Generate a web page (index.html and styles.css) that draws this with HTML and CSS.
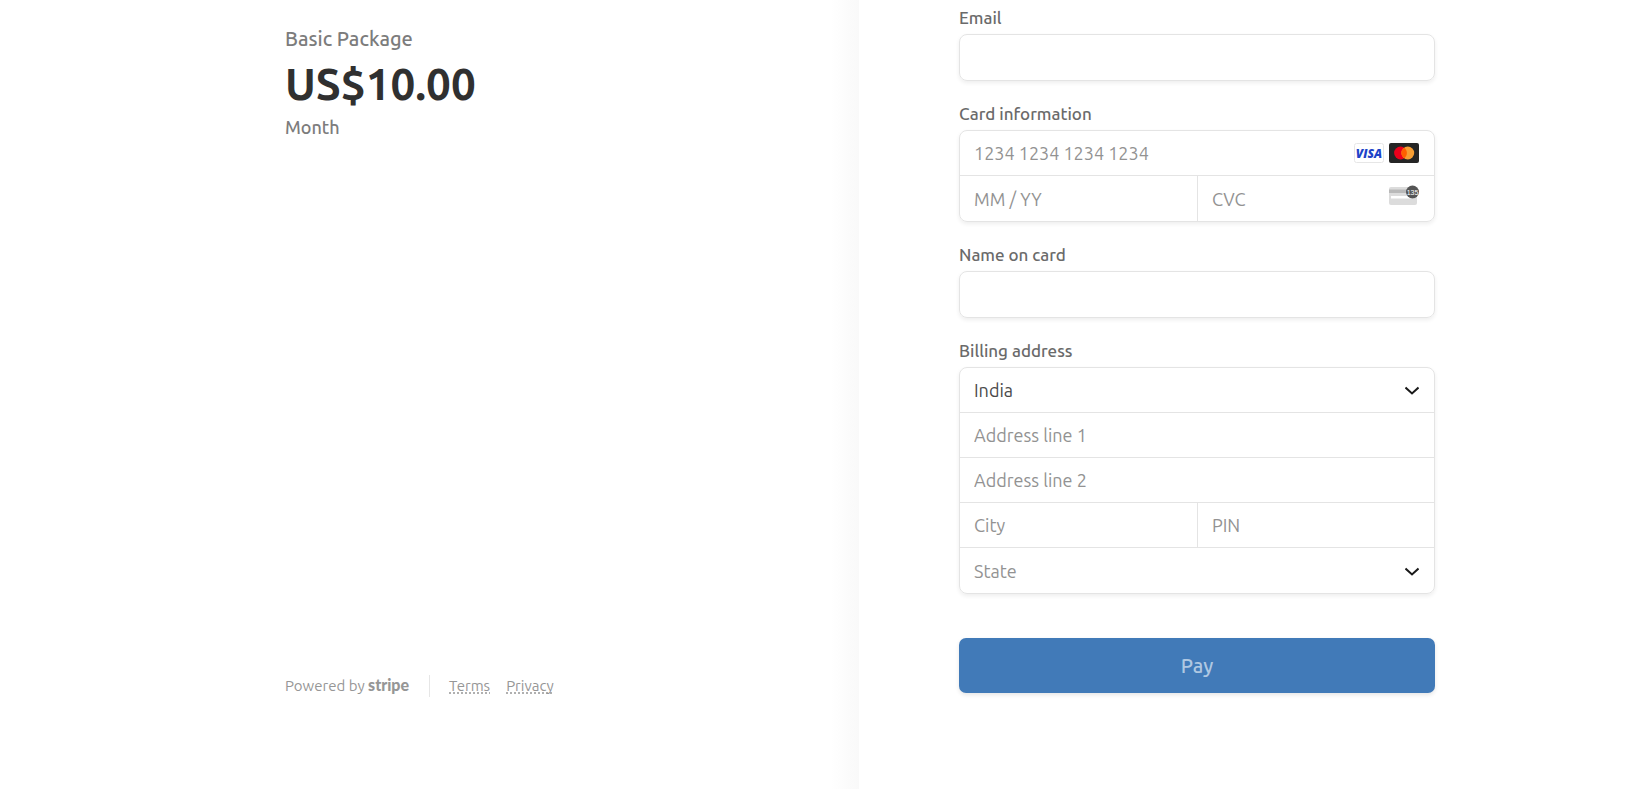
FILE: index.html
```
<!DOCTYPE html>
<html lang="en">
    <head>
        <meta charset="UTF-8">
        <meta name="viewport" content="width=device-width, initial-scale=1.0">
        <title>Checkout</title>
        <link rel="stylesheet" href="styles.css">
    </head>
    <body>
        <div class="checkout">
            <div class="overview">
                <div class="overview-inner">
                    <div class="product">
                        <h1 class="product-name">Basic Package</h1>
                        <p class="product-price">US$10.00</p>
                        <p class="product-period">Month</p>
                    </div>
                    <footer class="footer">
                        <span class="powered">Powered by <strong class="stripe">stripe</strong></span>
                        <nav class="footer-links">
                            <a href="#">Terms</a>
                            <a href="#">Privacy</a>
                        </nav>
                    </footer>
                </div>
            </div>

            <main class="payment">
                <form class="payment-form">
                    <div class="field">
                        <label for="email">Email</label>
                        <div class="box">
                            <div class="cell"><input type="email" id="email"></div>
                        </div>
                    </div>

                    <div class="field">
                        <label for="cardNumber">Card information</label>
                        <div class="box">
                            <div class="cell">
                                <input type="text" id="cardNumber" placeholder="1234 1234 1234 1234">
                                <div class="icons">
                                    <svg width="30" height="20" viewBox="0 0 30 20" role="img" aria-label="Visa">
                                        <rect x="0.5" y="0.5" width="29" height="19" rx="2" fill="#fff" stroke="#e6e6e6"/>
                                        <text class="visa-text" x="15" y="14.5" text-anchor="middle">VISA</text>
                                    </svg>
                                    <svg width="30" height="20" viewBox="0 0 30 20" role="img" aria-label="Mastercard">
                                        <rect width="30" height="20" rx="2" fill="#252525"/>
                                        <circle cx="11.5" cy="10" r="6.4" fill="#eb001b"/>
                                        <circle cx="18.8" cy="10" r="6.4" fill="#f79e33"/>
                                        <path d="M15.15 4.75a6.4 6.4 0 0 1 0 10.5a6.4 6.4 0 0 1 0-10.5z" fill="#ff5f00"/>
                                    </svg>
                                </div>
                            </div>
                            <div class="row">
                                <div class="cell"><input type="text" placeholder="MM / YY" aria-label="Expiration"></div>
                                <div class="cell">
                                    <input type="text" placeholder="CVC" aria-label="CVC">
                                    <div class="icons">
                                        <svg width="30" height="28" viewBox="0 0 30 28" aria-hidden="true">
                                            <rect y="2" width="28" height="18" rx="2" fill="#dcdcdc"/>
                                            <path d="M0 4.5h28V8H0z" fill="#b9b9b9"/>
                                            <rect x="2" y="11" width="23" height="2.5" fill="#fff"/>
                                            <circle cx="23.5" cy="7" r="6.5" fill="#555"/>
                                            <text class="cvc-text" x="23.5" y="9.5" text-anchor="middle">135</text>
                                        </svg>
                                    </div>
                                </div>
                            </div>
                        </div>
                    </div>

                    <div class="field">
                        <label for="cardName">Name on card</label>
                        <div class="box">
                            <div class="cell"><input type="text" id="cardName"></div>
                        </div>
                    </div>

                    <div class="field">
                        <label for="country">Billing address</label>
                        <div class="box">
                            <div class="cell select-cell">
                                <select id="country">
                                    <option>India</option>
                                </select>
                                <svg class="chevron" width="14" height="10" viewBox="0 0 14 10" aria-hidden="true">
                                    <path d="M0.5 2.5l6.5 6 6.5-6"/>
                                </svg>
                            </div>
                            <div class="cell"><input type="text" placeholder="Address line 1" aria-label="Address line 1"></div>
                            <div class="cell"><input type="text" placeholder="Address line 2" aria-label="Address line 2"></div>
                            <div class="row">
                                <div class="cell"><input type="text" placeholder="City" aria-label="City"></div>
                                <div class="cell"><input type="text" placeholder="PIN" aria-label="PIN"></div>
                            </div>
                            <div class="cell select-cell">
                                <select class="empty" aria-label="State">
                                    <option>State</option>
                                </select>
                                <svg class="chevron" width="14" height="10" viewBox="0 0 14 10" aria-hidden="true">
                                    <path d="M0.5 2.5l6.5 6 6.5-6"/>
                                </svg>
                            </div>
                        </div>
                    </div>

                    <button type="submit" class="pay">Pay</button>
                </form>
            </main>
        </div>
    </body>
</html>
```
FILE: styles.css
```
* {
    margin: 0;
    padding: 0;
    box-sizing: border-box;
    font-family: 'Ubuntu', 'Noto Sans', 'Open Sans', sans-serif;
}

body {
    background: #fff;
    color: #303030;
}

.checkout {
    display: grid;
    grid-template-columns: 859fr 787fr;
    min-height: 100vh;
}

.overview {
    display: flex;
    justify-content: flex-end;
    padding: 24px 98px 92px 24px;
    background: linear-gradient(to left, #f9f9f9, #fff 28px);
}

.overview-inner {
    display: flex;
    flex-direction: column;
    justify-content: space-between;
    width: 100%;
    max-width: 476px;
}

.product-name {
    color: #7c7c7c;
    font-size: 20px;
    font-weight: 500;
    line-height: 30px;
}

.product-price {
    font-size: 44px;
    font-weight: 700;
    line-height: 60px;
}

.product-period {
    color: #7c7c7c;
    font-size: 18px;
    font-weight: 500;
    line-height: 26px;
}

.footer {
    display: flex;
    align-items: center;
    color: #969696;
    font-size: 15px;
    line-height: 22px;
}

.powered {
    padding-right: 20px;
    border-right: 1px solid #e6e6e6;
}

.stripe {
    font-family: 'Lato', sans-serif;
    font-size: 16px;
    font-weight: 900;
    line-height: 20px;
}

.footer-links {
    display: flex;
    gap: 16px;
    padding-left: 19px;
}

.footer-links a {
    color: inherit;
    text-decoration: underline dotted;
    text-decoration-skip-ink: none;
    text-underline-offset: 2px;
}

.payment {
    padding: 8px 24px 96px 100px;
    background: #fff;
}

.payment-form {
    max-width: 476px;
}

.field {
    margin-bottom: 23px;
}

.field label {
    display: block;
    margin-bottom: 6px;
    color: #6a6a6a;
    font-size: 17px;
    font-weight: 500;
    line-height: 20px;
}

.box {
    border: 1px solid #e4e4e4;
    border-radius: 8px;
    box-shadow: 0 2px 4px rgba(0, 0, 0, 0.07);
    overflow: hidden;
}

.row {
    display: grid;
    grid-template-columns: repeat(2, minmax(0, 1fr));
}

.row .cell + .cell {
    border-left: 1px solid #e4e4e4;
}

.cell {
    display: flex;
    align-items: center;
    height: 45px;
}

.box > :not(:last-child) {
    border-bottom: 1px solid #e4e4e4;
}

.row:not(:last-child) .cell {
    height: 44px;
}

.cell input,
.cell select {
    flex: 1;
    min-width: 0;
    height: 100%;
    padding: 0 14px;
    border: none;
    outline: none;
    background: transparent;
    color: #4a4a4a;
    font-size: 18px;
}

.cell input::placeholder,
.cell .empty {
    color: #929292;
}

.icons {
    display: flex;
    gap: 5px;
    padding-right: 15px;
}

.icons svg {
    flex: none;
}

.select-cell {
    display: grid;
    align-items: center;
}

.select-cell select,
.chevron {
    grid-area: 1 / 1;
}

.select-cell select {
    appearance: none;
    cursor: pointer;
}

.chevron {
    justify-self: end;
    margin-right: 15px;
    fill: none;
    stroke: #1a1a1a;
    stroke-width: 2;
    pointer-events: none;
}

.visa-text {
    fill: #1d43c8;
    font-family: 'Open Sans', sans-serif;
    font-size: 12px;
    font-style: italic;
    font-weight: 800;
}

.cvc-text {
    fill: #fff;
    font-family: 'Liberation Sans', sans-serif;
    font-size: 7px;
}

.pay {
    width: 100%;
    height: 55px;
    margin-top: 21px;
    border: none;
    border-radius: 7px;
    background: #417ab8;
    box-shadow: 0 2px 4px rgba(0, 0, 0, 0.1);
    color: #afc8e2;
    font-size: 20px;
    font-weight: 500;
    cursor: pointer;
}
```
